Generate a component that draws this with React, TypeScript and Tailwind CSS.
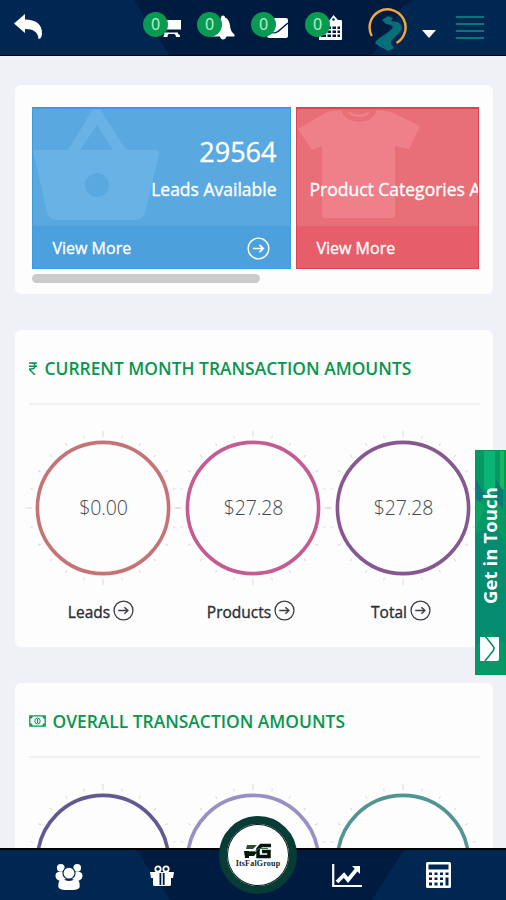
import type { ReactNode } from "react";

const sans = "font-['Open_Sans','Noto_Sans',sans-serif]";

function ArrowCircle({ className }: { className: string }) {
  return (
    <svg viewBox="0 0 24 24" className={className} fill="none" stroke="currentColor" strokeWidth="1.5">
      <circle cx="12" cy="12" r="10.8" />
      <path d="M6 12h11M13 8.200l4 3.800-4 3.800" strokeWidth="1.700" />
    </svg>
  );
}

function Badged({ children, icon }: { children: ReactNode; icon: string }) {
  return (
    <div className="relative h-[30px] w-[54px] shrink-0">
      <svg viewBox="0 0 54 30" className="h-[30px] w-[54px]" fill="#fff">
        {icon === "cart" && (
          <path d="M18 8h20v9.500H22v3h13v1.500q2 0 2 3h-4q0-2-1.500-3h-6q-1 1-1 3h-4q0-2 1-3l-3-7z" />
        )}
        {icon === "bell" && (
          <path d="M26 3.500c1.500 0 2 1 2 2 3 1 4.500 4 5 8 .5 5 2 7 4.500 9v2h-8c-1 4-6 4-6.500 0H14v-2c3-2 4-5 4-9 0-4 2-6 6-7 0-2 .5-3 2-3z" />
        )}
        {icon === "mail" && (
          <>
            <rect x="16" y="6" width="21" height="20" rx="2" />
            <path d="M17 18c5 5 9 3 13-1l7-6" fill="none" stroke="#03193f" strokeWidth="1.500" />
          </>
        )}
        {icon === "calendar" && (
          <>
            <path d="M14 9h10l4.500-6L33 8h3q1 0 1 1v18q0 1-1 1H14z" />
            <circle cx="28.500" cy="7.500" r="1.200" fill="#03193f" />
            <path d="M16 14.500h5V17h-5zm6.500 0H26V17h-3.500zm5 0H31V17h-3.500zm5 0H35V17h-2.500zM16 18.500h5V21h-5zm6.500 0H26V21h-3.500zm5 0H31V21h-3.500zm5 0H35V21h-2.500zM16 22.500h5V25h-5zm6.500 0H26V25h-3.500zm5 0H31V25h-3.500zm5 0H35V25h-2.500z" fill="#03193f" />
          </>
        )}
      </svg>
      <span className="absolute left-0 top-0 flex size-[25px] items-center justify-center rounded-full bg-[#079b51] font-['Noto_Sans',sans-serif] text-[16px] leading-none text-[#b9ecd0]">
        {children}
      </span>
    </div>
  );
}

function Header() {
  return (
    <header className="relative flex h-14 shrink-0 items-start overflow-hidden border-b border-black bg-[#002752]">
      <svg viewBox="0 0 506 56" className="absolute inset-0 h-14 w-[506px]">
        <path d="M134 0h280l-11 6-31 50H170z" fill="#001b40" />
      </svg>
      <svg viewBox="0 0 28 25" className="relative ml-[14px] mt-[14px] h-[25px] w-7" fill="#fff">
        <path d="M0 9.500 11 0v5.500c11 0 17 5 17 13.500 0 3-1 6-3.500 6-.5-7-5-10-13.500-10v4z" />
      </svg>
      <div className="relative ml-[101px] mt-[11.5px] flex">
        <Badged icon="cart">0</Badged>
        <Badged icon="bell">0</Badged>
        <Badged icon="mail">0</Badged>
        <Badged icon="calendar">0</Badged>
      </div>
      <svg viewBox="0 0 40 44" className="relative ml-[9px] mt-2 h-11 w-10" fill="none">
        <path d="M3.800 28A18 18 0 1 1 28.500 35" stroke="#f2a83b" strokeWidth="2.400" />
        <path d="M14 12l6-4 5 2-2 3 6 1c7 3 5 8 2 11l-7 7c-2 3 0 5 2 8l-6 3c-4-3-9-4-13-8 4-7 14-9 18-16-2-3-5-2-7-3z" fill="#087078" />
        <path d="M24 14c6 4-3 10-7 14-4 4-5 7 0 12" stroke="#045f6e" strokeWidth="1" />
      </svg>
      <svg viewBox="0 0 14 8" className="relative ml-[14px] mt-[30px] h-2 w-[14px]" fill="#fff">
        <path d="M0 0h14L7 8z" />
      </svg>
      <div className="relative ml-[20px] mt-[15.5px] flex w-7 flex-col gap-[5px]">
        <i className="h-[2px] bg-[#06787b]" />
        <i className="h-[2px] bg-[#06787b]" />
        <i className="h-[2px] bg-[#06787b]" />
        <i className="h-[2px] bg-[#06787b]" />
      </div>
    </header>
  );
}

function Tiles() {
  return (
    <section className="h-[209px] shrink-0 rounded-md bg-[#fdfdfe] pl-[16.5px] pr-[14.5px] pt-[22px]">
      <div className="flex h-[162px] gap-[5px] overflow-hidden text-white [-webkit-text-stroke:0.35px_white]">
        <div className="relative flex w-[259px] shrink-0 flex-col border border-t-2 border-[#3b9cdc] bg-[#5aa8e0]">
          <svg viewBox="0 0 130 114" className="absolute left-0 top-0 h-[114px] w-[130px]" fill="#68b2e6">
            <path fillRule="evenodd" d="M0 41h35L60 0h7l26 41h30q4 1 3 5l-14 58q-3 7-9 7H23q-7-1-9-7zM47 41h33L64 16zM64 64a12 12 0 1 0 .1 0z" />
          </svg>
          <div className="relative flex flex-1 flex-col items-end pr-[13px] pt-[23px]">
            <span className="text-[27px] leading-[40px]">29564</span>
            <span className="mt-[5px] text-[17.500px] leading-[24px]">Leads Available</span>
          </div>
          <div className="relative flex h-[42px] items-center justify-between bg-[#4ca0dc] pl-5 pr-5">
            <span className="pt-[2px] text-[16px]">View More</span>
            <ArrowCircle className="mt-[2px] size-[23px]" />
          </div>
        </div>
        <div className="relative flex w-[183px] shrink-0 flex-col overflow-hidden border border-t-2 border-[#de4353] bg-[#e86f78]">
          <svg viewBox="0 0 126 112" className="absolute left-0 top-0 h-[112px] w-[126px]" fill="#ef808a">
            <path d="M30 3l14-2c5 16 31 16 36 0l14 2 29 14-11 23-14-3v69q0 3-3 3H28q-3 0-3-3V37l-10 4L1 20z" />
            <path d="M51 2q11 7 22 0l-2 4q-9 4-18 0z" />
          </svg>
          <div className="relative flex flex-1 flex-col pl-[13px] pt-[68px]">
            <span className="whitespace-nowrap text-[17.500px] leading-[24px]">Product Categories Available</span>
          </div>
          <div className="relative flex h-[42px] items-center bg-[#e65e6a] pl-5">
            <span className="pt-[2px] text-[16px]">View More</span>
          </div>
        </div>
      </div>
      <div className="mt-[5px] h-[9px] w-[228px] rounded-full bg-[#cbcbcb]" />
    </section>
  );
}

const ticks = Array.from({ length: 24 }, (_, i) => i * 15);

function Gauge({ color, value, label }: { color: string; value?: string; label?: string }) {
  return (
    <div className="flex w-[150px] shrink-0 flex-col items-center">
      <div className="-mx-[5px] grid h-[156px] w-[160px] place-items-center">
        <svg viewBox="-80 -78 160 156" className="col-start-1 row-start-1 h-[156px] w-[160px]">
          {ticks.map((a) => (
            <path key={a} d={a % 90 === 0 ? "M0-77v6" : "M0-75v3"} transform={`rotate(${a})`} stroke="#dadadd" strokeWidth="1" />
          ))}
          <circle r="65.600" fill="none" stroke={color} strokeWidth="3.600" />
        </svg>
        {value && (
          <span className="col-start-1 row-start-1 pl-[1px] text-[19.500px] font-light leading-none tracking-[-0.100px] text-[#44484e]">{value}</span>
        )}
      </div>
      {label && (
        <div className="mt-[13px] flex h-[22px] items-center gap-[3px] pr-[4px] text-[15.500px] leading-[22px] text-[#2b2d31] [-webkit-text-stroke:0.35px_#2b2d31]">
          <span className="pt-[4px]">{label}</span>
          <ArrowCircle className="size-[21px] text-[#3d3f43]" />
        </div>
      )}
    </div>
  );
}

function Panel({ icon, title, children, className }: { icon: ReactNode; title: string; children: ReactNode; className: string }) {
  return (
    <section className={`shrink-0 rounded-md bg-[#fdfdfe] px-[13.5px] ${className}`}>
      <div className="flex h-[75px] items-center border-b-2 border-[#f0f1f3] pt-[3px] text-[#08964f]">
        {icon}
        <h2 className="whitespace-nowrap text-[17.400px] font-semibold">{title}</h2>
      </div>
      <div className="-ml-[0.500px] flex pt-[25px]">{children}</div>
    </section>
  );
}

function Footer() {
  return (
    <footer className="relative h-[52px] shrink-0 border-t-2 border-black bg-[#002752]">
      <svg viewBox="0 0 506 50" className="absolute inset-0 h-[50px] w-[506px]">
        <path d="M136 0h268l-32 50H170z" fill="#001b40" />
      </svg>
      <div className="relative flex pl-[54px] pt-[12px]">
        <svg viewBox="0 0 30 30" className="mt-[1px] h-[29px] w-[30px]" fill="#fff">
          <circle cx="6.500" cy="5" r="4" />
          <circle cx="23.500" cy="5" r="4" />
          <path d="M1 13q0-4 5-4h4q1 5 3 7l-6 3q-6-1-6-6zM29 13q0-4-5-4h-4q-1 5-3 7l6 3q6-1 6-6z" />
          <circle cx="15" cy="10.500" r="6.800" fill="#002752" />
          <circle cx="15" cy="10.500" r="5.600" />
          <path d="M4 22q0-5 5-5 6 3 12 0 5 0 5 5v3q-1 3-11 3T4 25z" />
        </svg>
        <svg viewBox="0 0 24 22" className="ml-[66px] mt-[3px] h-[22px] w-6">
          <g fill="none" stroke="#fff" strokeWidth="1.800">
            <circle cx="8" cy="4" r="2.700" />
            <circle cx="16" cy="4" r="2.700" />
          </g>
          <path d="M0 7h24l-1 6h-2v7q0 1-2 1H5q-2 0-2-1v-7H1z" fill="#fff" />
          <path d="M9.500 8v12h1.800V8zm3.300 0v12h1.800V8z" fill="#001b40" />
        </svg>
        <svg viewBox="0 0 30 24" className="ml-[158px] mt-[2px] h-6 w-[30px]" fill="none" stroke="#fff">
          <path d="M1.200 0v22H30" strokeWidth="2.200" />
          <path d="M5 18l7-7 4 5 9-11" strokeWidth="3.800" />
          <path d="M20 2h8v8z" fill="#fff" stroke="none" />
        </svg>
        <svg viewBox="0 0 25 26" className="ml-[64px] h-[26px] w-[25px]">
          <rect width="25" height="26" rx="1.500" fill="#fff" />
          <path d="M2.500 2.500h20v5h-20zM3 10.500h3v2.500H3zm5.500 0h3v2.500h-3zm5.500 0h3v2.500h-3zm5.500 0h3v2.500h-3zM3 15.500h3V18H3zm5.500 0h3V18h-3zm5.500 0h3V18h-3zm5.500 0h3v8h-3zM3 20.500h3v3H3zm5.500 0h3v3h-3zm5.500 0h3v3h-3z" fill="#002752" />
        </svg>
      </div>
      <div className="absolute left-[219px] top-[-34px] flex size-[78px] flex-col items-center rounded-full border-[8px] border-[#063c35] bg-white pt-[19px] shadow-[inset_0_0_0_1px_#001c1c]">
        <svg viewBox="0 0 28 16" className="h-[16px] w-7" fill="none">
          <path d="M3 2h10L9 6H2z" fill="#2b4c36" />
          <path d="M0 8h5v7H1zM5 9h8l-3 4H5z" fill="#07140e" />
          <path d="M27 2.500H17l-3 3.500v7.500h11V8.500h-7" stroke="#07140e" strokeWidth="3.500" />
          <path d="M5 8.500h6l4-3h9" stroke="#2b7750" strokeWidth="1" />
        </svg>
        <span className="font-['Liberation_Serif',serif] text-[8px] font-bold leading-[9px] tracking-[0.2px] text-[#16281f]">ItsFalGroup</span>
      </div>
    </footer>
  );
}

function ContactTab() {
  return (
    <aside className="absolute right-0 top-[450px] flex h-[225px] w-[31.500px] flex-col items-center overflow-hidden border border-[#079653] bg-[#058b70]">
      <svg viewBox="0 0 31 225" className="absolute inset-0 h-[225px] w-[31px]">
        <path d="M0 0h31v98L18 70 0 84z" fill="#079963" />
        <path d="M8 0h11v38H8z" fill="#09b574" />
        <path d="M24 0h4v38h-4z" fill="#18b85c" />
        <path d="M0 28l10 18-10 7zM20 28l7 12v18l-9-10z" fill="#087b78" />
        <path d="M0 48l9 7-9 25z" fill="#08a365" />
        <path d="M0 195l14-14 17 14v30H0z" fill="#089868" />
      </svg>
      <span className="relative mt-[36px] h-[118px] rotate-180 whitespace-nowrap text-center text-[18.500px] font-bold leading-[30px] tracking-[0.100px] text-white [writing-mode:vertical-rl]">Get in Touch</span>
      <svg viewBox="0 0 20 25" className="relative mt-[31px] h-[25px] w-5">
        <path d="M0 1h18q1 0 1 1v21q0 2-2 2H1q-1 0-1-1z" fill="#fff" />
        <path d="M5 0l8 10q2 2 0 5L5 25" fill="none" stroke="#058b70" strokeWidth="1.600" />
      </svg>
    </aside>
  );
}

export default function App() {
  return (
    <div className={`relative flex h-[900px] w-[506px] flex-col overflow-hidden bg-[#f0f1f7] ${sans}`}>
      <Header />
      <main className="flex min-h-0 flex-1 flex-col gap-9 overflow-hidden pl-[15px] pr-[13px] pt-[29px]">
        <Tiles />
        <Panel
          className="h-[317px]"
          title="CURRENT MONTH TRANSACTION AMOUNTS"
          icon={
            <svg viewBox="0 0 8 13" className="mr-[8px] h-[13px] w-2" fill="none" stroke="currentColor" strokeWidth="1.500">
              <path d="M0 1h8M0 4.300h8M0 1h2q4 0 4 3t-4 3H0l6 6" />
            </svg>
          }
        >
          <Gauge color="#c57476" value="$0.00" label="Leads" />
          <Gauge color="#c45b91" value="$27.28" label="Products" />
          <Gauge color="#87588f" value="$27.28" label="Total" />
        </Panel>
        <Panel
          className="h-[317px]"
          title="OVERALL TRANSACTION AMOUNTS"
          icon={
            <svg viewBox="0 0 17 12" className="mr-[7px] h-3 w-[17px]" fill="none" stroke="currentColor">
              <path d="M.8.800h15.400v10.400H.8zM1 3q2 0 2-2M14 1q0 2 2 2M1 9q2 0 2 2M14 11q0-2 2-2" strokeWidth="1.300" />
              <ellipse cx="8.500" cy="6" rx="2.700" ry="3" />
              <path d="M8.500 4v4" strokeWidth="1.200" />
            </svg>
          }
        >
          <Gauge color="#625993" />
          <Gauge color="#9690c5" />
          <Gauge color="#529493" />
        </Panel>
      </main>
      <Footer />
      <ContactTab />
    </div>
  );
}
